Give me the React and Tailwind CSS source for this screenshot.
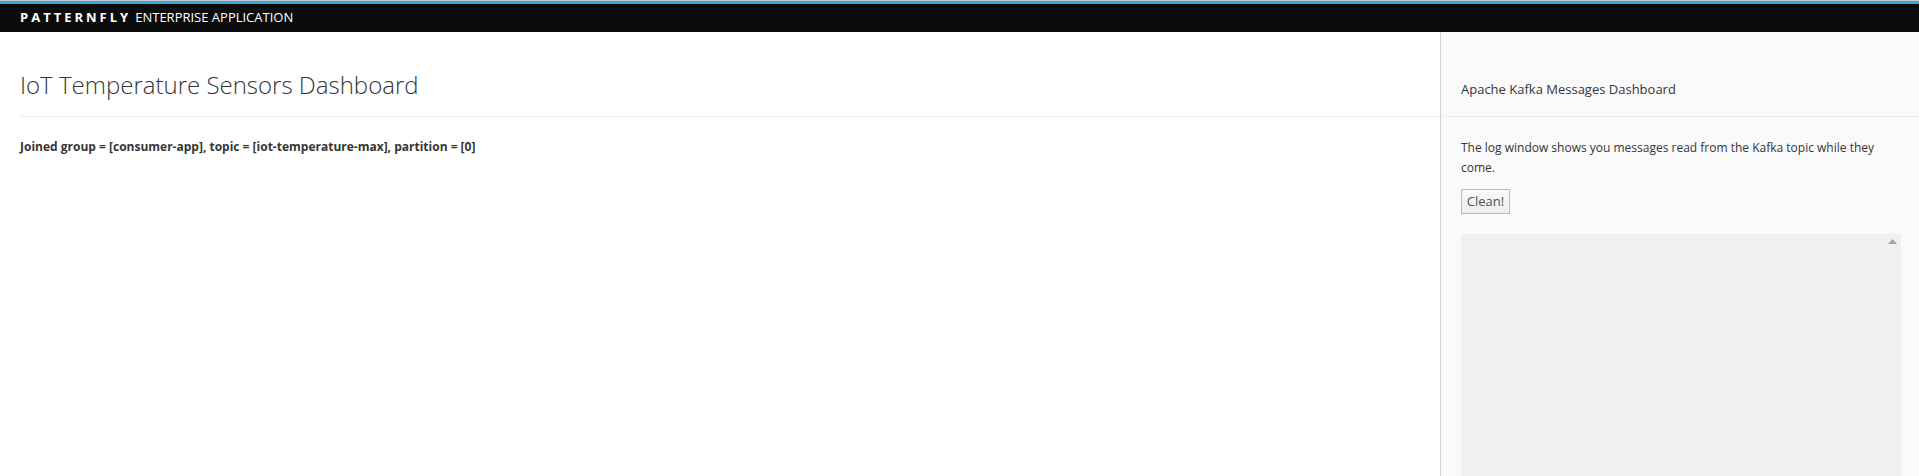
export default function App() {
  const font = { fontFamily: '"Open Sans", "Noto Sans", sans-serif' };
  return (
    <div className="w-[1919px] h-[476px] overflow-hidden bg-white text-[#363636] flex flex-col" style={font}>
      <header className="h-[32px] shrink-0 bg-[#0b0b0b] border-t border-[#c8c8c8] flex flex-col">
        <div className="h-[3px] bg-[#39a5dc]" />
        <div className="flex-1 flex items-center pl-[20px] text-white text-[13px] leading-none pb-[1px]">
          <span className="font-bold tracking-[3px]">PATTERNFLY</span>
          <span className="ml-[4px] font-normal">ENTERPRISE APPLICATION</span>
        </div>
      </header>
      <div className="flex flex-1 min-h-0">
        <main className="w-[1440px] shrink-0 pl-[20px]">
          <div className="pt-[40px] pb-[18px] border-b border-[#ededed]">
            <h1 className="text-[24px] leading-[26px] font-light text-[#363636]">IoT Temperature Sensors Dashboard</h1>
          </div>
          <p className="mt-[20px] text-[12px] leading-[20px] font-bold text-[#363636]">
            Joined group = [consumer-app], topic = [iot-temperature-max], partition = [0]
          </p>
        </main>
        <aside className="flex-1 bg-[#fafafa] border-l border-[#d1d1d1] flex flex-col min-h-0">
          <div className="pt-[47px] pb-[17px] px-[20px] border-b border-[#ededed]">
            <h2 className="text-[13px] leading-[20px] font-normal text-[#363636]">Apache Kafka Messages Dashboard</h2>
          </div>
          <div className="px-[20px] pr-[18px] flex flex-col flex-1 min-h-0">
            <p className="mt-[21px] text-[12px] leading-[20px] text-[#363636]">
              The log window shows you messages read from the Kafka topic while they come.
            </p>
            <div className="mt-[10px]">
              <button className="h-[25px] w-[49px] border border-[#bbbbbb] bg-gradient-to-b from-[#fafafa] to-[#ededed] text-[13px] text-[#4d5258] leading-none">
                Clean!
              </button>
            </div>
            <div className="mt-[20px] flex-1 bg-[#f0f0f0] relative">
              <svg className="absolute right-[4px] top-[5px]" width="9" height="6" viewBox="0 0 9 6">
                <polygon points="4.5,0 9,5 0,5" fill="#a3a3a3" />
              </svg>
            </div>
          </div>
        </aside>
      </div>
    </div>
  );
}
